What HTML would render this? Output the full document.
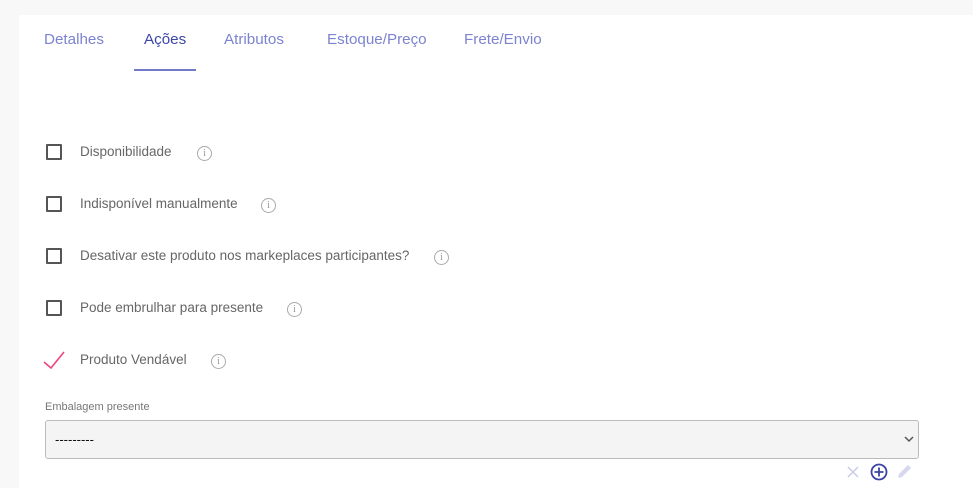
<!DOCTYPE html>
<html><head><meta charset="utf-8"><style>
*{margin:0;padding:0;box-sizing:border-box}
body{width:973px;height:488px;background:#f8f8f8;font-family:"Liberation Sans",sans-serif;position:relative;overflow:hidden}
.card{position:absolute;left:19px;top:15px;right:0;bottom:0;background:#fff}
.tab{position:absolute;top:31px;font-size:15.2px;color:#7c83cf}
.tab.a{color:#3d47a6}
.ul{position:absolute;left:134px;top:69px;width:62px;height:2px;background:#7279c9}
.cb{position:absolute;left:46px;width:16px;height:16px;border:2px solid #555;border-radius:1px}
.lb{position:absolute;left:80px;font-size:13.5px;color:#666}
.inf{position:absolute;width:15px;height:15px;border:1px solid #aaa;border-radius:50%;color:#999;font-size:10px;line-height:13px;text-align:center;font-family:"Liberation Serif",serif}
.cap{position:absolute;left:45px;top:401px;font-size:11px;color:#777}
.sel{position:absolute;left:45px;top:420px;width:874px;height:39px;background:#f4f4f4;border:1px solid #bbb;border-radius:3px}
.sel span{position:absolute;left:9px;top:11px;font-size:13px;color:#111}
</style></head><body>
<div class="card"></div>
<div class="tab" style="left:44px">Detalhes</div>
<div class="tab a" style="left:144px">Ações</div>
<div class="tab" style="left:224px">Atributos</div>
<div class="tab" style="left:327px">Estoque/Preço</div>
<div class="tab" style="left:464px">Frete/Envio</div>
<div class="ul"></div>

<div class="cb" style="top:144px"></div><div class="lb" style="top:144px">Disponibilidade</div><div class="inf" style="left:197px;top:146px">i</div>
<div class="cb" style="top:196px"></div><div class="lb" style="top:196px">Indisponível manualmente</div><div class="inf" style="left:261px;top:198px">i</div>
<div class="cb" style="top:248px"></div><div class="lb" style="top:248px">Desativar este produto nos markeplaces participantes?</div><div class="inf" style="left:434px;top:250px">i</div>
<div class="cb" style="top:300px"></div><div class="lb" style="top:300px">Pode embrulhar para presente</div><div class="inf" style="left:287px;top:302px">i</div>
<svg style="position:absolute;left:43px;top:350px" width="24" height="20"><path d="M1 12 L8 18 L21 2" fill="none" stroke="#f0437a" stroke-width="1.6"/></svg>
<div class="lb" style="top:352px">Produto Vendável</div><div class="inf" style="left:211px;top:354px">i</div>

<div class="cap">Embalagem presente</div>
<div class="sel"><span>---------</span>
<svg style="position:absolute;right:4px;top:15px" width="10" height="7"><path d="M1 1 L5 5 L9 1" fill="none" stroke="#555" stroke-width="1.5"/></svg></div>
<svg style="position:absolute;left:846px;top:465px" width="14" height="14"><path d="M2 2 L12 12 M12 2 L2 12" stroke="#c9cbe9" stroke-width="1.5"/></svg>
<svg style="position:absolute;left:870px;top:463px" width="18" height="18"><circle cx="9" cy="9" r="7.5" fill="none" stroke="#3a44a6" stroke-width="1.8"/><path d="M9 4.5V13.5M4.5 9H13.5" stroke="#3a44a6" stroke-width="1.8"/></svg>
<svg style="position:absolute;left:895px;top:463px" width="18" height="18"><path d="M3 15 L4 11 L13 2 L16 5 L7 14 Z" fill="#d6d8f0"/></svg>
</body></html>
